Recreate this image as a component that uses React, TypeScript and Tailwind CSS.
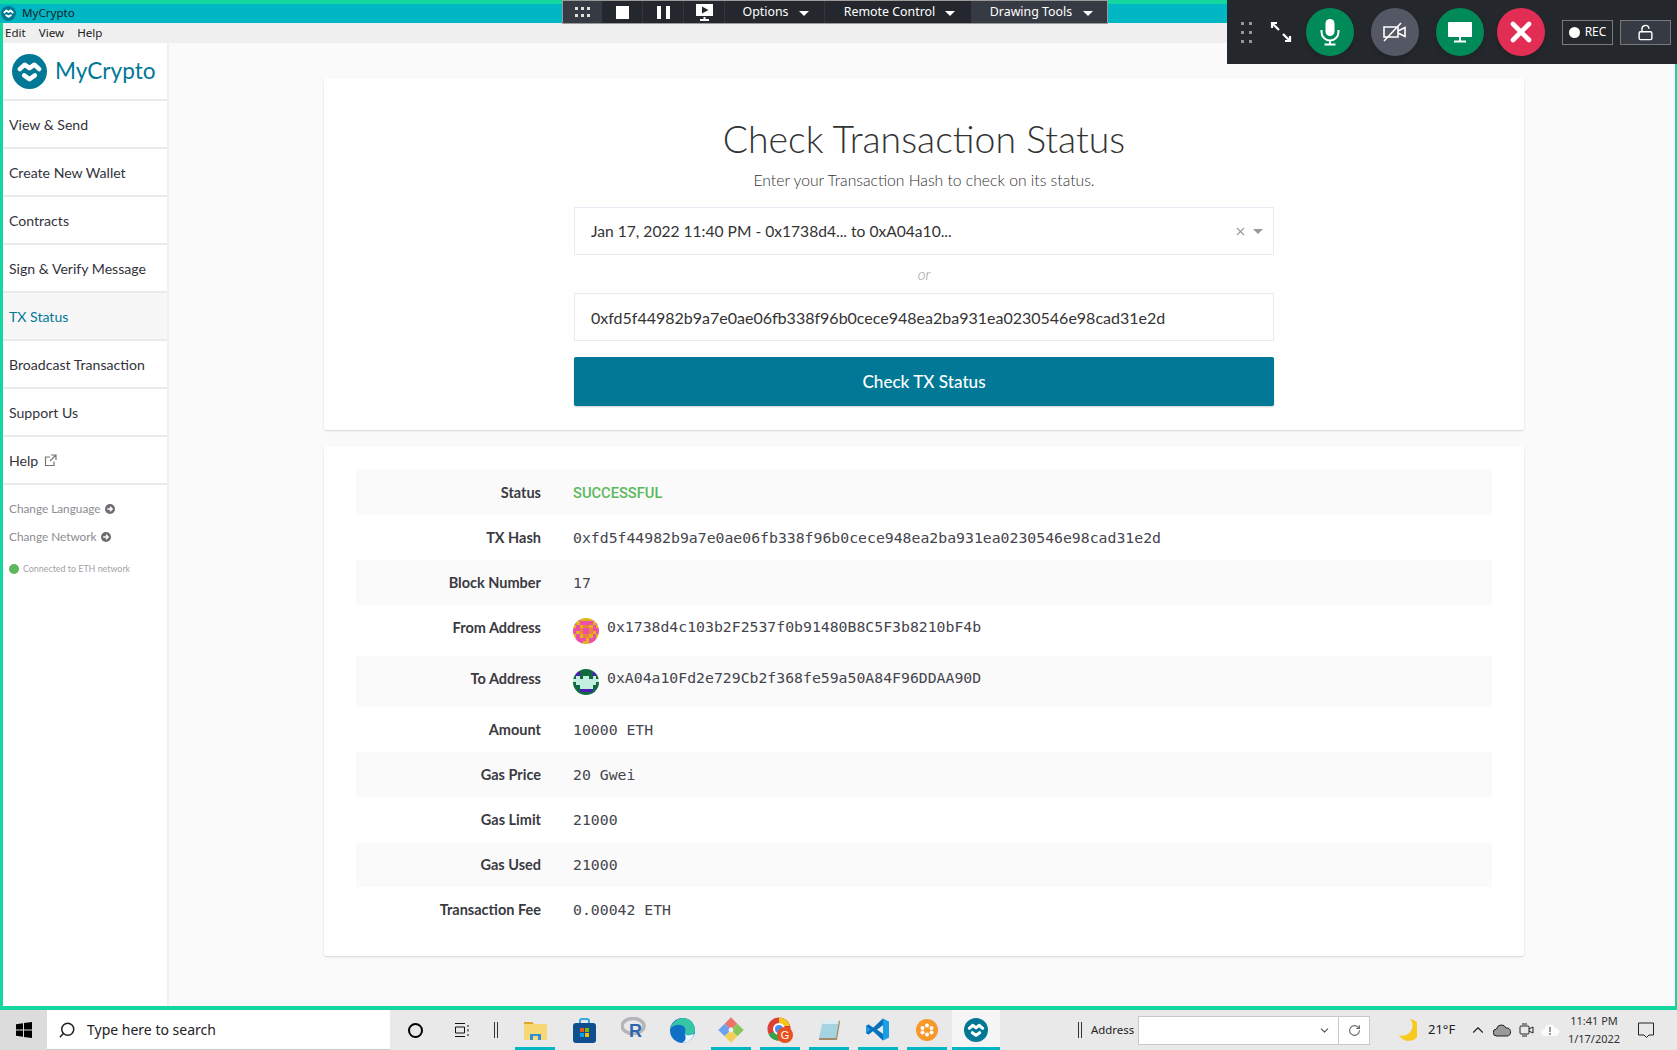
import React from "react";
import { ChevronDown, ChevronUp, LockOpen, RotateCw, Search, X } from "lucide-react";

const sans = "font-['Lato','Noto_Sans',sans-serif]";
const mono = "font-['DejaVu_Sans_Mono',monospace]";
const ui = "font-['Noto_Sans','Open_Sans',sans-serif]";

function Logo({ size, bg = "#007896" }: { size: number; bg?: string }) {
  return (
    <svg width={size} height={size} viewBox="0 0 36 36" className="shrink-0">
      <circle cx="18" cy="18" r="18" fill={bg} />
      <path d="M8 15.5 L13 11 L18 14.5 L23 11 L28 15.5" fill="none" stroke="#fff" strokeWidth="4.6" strokeLinecap="round" strokeLinejoin="round" />
      <path d="M12.5 22 L18 26 L23.5 22" fill="none" stroke="#fff" strokeWidth="4.6" strokeLinecap="round" strokeLinejoin="round" />
    </svg>
  );
}

function Identicon({ cells, colors }: { cells: string[]; colors: Record<string, string> }) {
  return (
    <svg width="26" height="26" viewBox="0 0 8 8" className="mt-[6px] shrink-0 rounded-full" shapeRendering="crispEdges">
      {cells.map((row, y) => row.split("").map((c, x) => <rect key={x + "-" + y} x={x} y={y} width="1" height="1" fill={colors[c]} />))}
    </svg>
  );
}

function CircleGo() {
  return (
    <svg width="10" height="10" viewBox="0 0 10 10" className="shrink-0">
      <circle cx="5" cy="5" r="5" fill="#6b6b70" />
      <path d="M2.2 5H7M5 2.8 7.2 5 5 7.2" fill="none" stroke="#fff" strokeWidth="1.4" />
    </svg>
  );
}

const nav = ["View & Send", "Create New Wallet", "Contracts", "Sign & Verify Message", "TX Status", "Broadcast Transaction", "Support Us"];

function Row({ label, odd, tall, children }: { label: string; odd: boolean; tall?: boolean; children: React.ReactNode }) {
  return (
    <div className={`flex items-center ${tall ? "h-[51px] pb-[6px]" : "h-[45px]"} ${odd ? "bg-[#fafafa]" : "bg-white"}`}>
      <div className={`${sans} w-[185px] shrink-0 text-right text-[14.5px] font-bold text-[#3a3a42]`}>{label}</div>
      <div className={`${mono} ml-8 flex items-center gap-2 text-[14.8px] text-[#45454d] ${tall ? "" : "mt-[2px]"}`}>{children}</div>
    </div>
  );
}

function TaskIcon({ x, active, children }: { x?: boolean; active?: boolean; children: React.ReactNode }) {
  return (
    <div className={`relative flex h-10 items-center justify-center ${active ? "w-[48px] bg-[#f5f5f5]" : "w-[40px]"} ${x ? "" : "border-b-[3px] border-[#00b7c3] pt-[2px]"}`}>{children}</div>
  );
}

export default function App() {
  return (
    <div className={`${sans} relative flex h-[1050px] w-[1677px] flex-col overflow-hidden bg-[#14d69f]`}>
      <div className="mt-1 flex h-[19px] items-center bg-[#00b7c3] pl-[1px]">
        <Logo size={15} bg="#00788f" />
        <span className={`${ui} ml-[6px] -translate-y-[1px] text-[11.6px] text-[#11222a]`}>MyCrypto</span>
      </div>
      <div className="flex h-[983px] pl-[3px] pr-[2px]">
        <div className="flex min-w-0 flex-1 flex-col">
          <div className={`${ui} flex h-5 items-center gap-[13px] bg-[#efefef] pl-[2px] text-[11.6px] text-[#222]`}>
            <span>Edit</span><span>View</span><span>Help</span>
          </div>
          <div className="flex min-h-0 flex-1 bg-[#fafafa]">
            <aside className="flex w-[166px] shrink-0 flex-col border-r-2 border-[#f0f0f0] bg-white">
              <div className="flex h-[58px] items-center gap-[8px] border-b-2 border-[#eaeaea] pl-[9px] pt-[1px]">
                <Logo size={35} />
                <span className="text-[22.6px] leading-none text-[#007896]">MyCrypto</span>
              </div>
              {nav.map((n) => (
                <div key={n} className={`flex h-12 items-center border-b-2 border-[#eaeaea] pl-[6px] pt-[1px] text-[14.1px] ${n === "TX Status" ? "bg-[#f7f7f7] text-[#007896]" : "text-[#33333b]"}`}>{n}</div>
              ))}
              <div className="flex h-12 items-center gap-[6px] border-b-2 border-[#eaeaea] pl-[6px] pt-[1px] text-[14.1px] text-[#33333b]">
                Help <svg width="13" height="13" viewBox="0 0 13 13" fill="none" stroke="#777" strokeWidth="1.2"><path d="M10 7.5V11.5H1.5V3H6M7 1H12V6M12 1 6 7" /></svg>
              </div>
              <div className="mt-[10px] flex h-[28px] items-center gap-[4px] pl-[6px] text-[11.8px] text-[#8c8c92]">
                Change Language <CircleGo />
              </div>
              <div className="flex h-[28px] items-center gap-[4px] pl-[6px] text-[11.8px] text-[#8c8c92]">
                Change Network <CircleGo />
              </div>
              <div className="mt-[11px] flex items-center gap-[4px] pl-[6px] text-[8.9px] text-[#a3a3a8]">
                <span className="h-[10px] w-[10px] rounded-full bg-[#5bb85d]" />
                Connected to ETH network
              </div>
            </aside>
            <main className="flex min-w-0 flex-1 flex-col items-start pl-[155px] pt-[35px]">
              <section className="flex h-[352px] w-[1200px] flex-col items-center rounded-[2px] bg-white pt-[37px] shadow-[0_1px_2px_rgba(0,0,0,0.15)]">
                <h1 className="text-[37.4px] font-light leading-[48px] text-[#333]">Check Transaction Status</h1>
                <p className="mt-[7px] text-[15.7px] font-light leading-5 text-[#333]">Enter your Transaction Hash to check on its status.</p>
                <div className="mt-[17px] flex h-[48px] w-[700px] items-center justify-between border border-[#e5ecf3] pl-[16px] pr-[9px] text-[15.6px] text-[#333]">
                  <span className="mt-[1px]">Jan 17, 2022 11:40 PM - 0x1738d4... to 0xA04a10...</span>
                  <span className="mr-[1px] flex items-center gap-[6px] text-[#999]">
                    <X size={13} />
                    <span className="h-0 w-0 border-x-[5px] border-t-[5px] border-x-transparent border-t-[#999]" />
                  </span>
                </div>
                <div className="flex h-[38px] items-center text-[15px] font-light italic text-[#999]">or</div>
                <div className="flex h-[48px] w-[700px] items-center border border-[#e5ecf3] pl-[16px] pt-[1px] text-[16px] text-[#333]">0xfd5f44982b9a7e0ae06fb338f96b0cece948ea2ba931ea0230546e98cad31e2d</div>
                <button className="mt-4 flex h-[49px] w-[700px] items-center justify-center rounded-[2px] bg-[#007896] text-[17.1px] font-medium text-white shadow-[0_1px_2px_rgba(0,0,0,0.2)]">Check TX Status</button>
              </section>
              <section className="mt-4 w-[1200px] rounded-[2px] bg-white px-8 pb-6 pt-6 shadow-[0_1px_2px_rgba(0,0,0,0.15)]">
                <Row label="Status" odd><span className="font-['Roboto',sans-serif] text-[14.7px] font-medium text-[#5cb85c]">SUCCESSFUL</span></Row>
                <Row label="TX Hash" odd={false}>0xfd5f44982b9a7e0ae06fb338f96b0cece948ea2ba931ea0230546e98cad31e2d</Row>
                <Row label="Block Number" odd>17</Row>
                <Row label="From Address" odd={false} tall>
                  <Identicon
                    colors={{ p: "#ec4ea8", y: "#dfb21f", o: "#ee7f42" }}
                    cells={["ppyyyypp", "pyppppyp", "ypyooypy", "ppoppopp", "pyoppoyp", "ypyooypy", "ppppyppp", "pppyyppp"]}
                  />
                  0x1738d4c103b2F2537f0b91480B8C5F3b8210bF4b
                </Row>
                <Row label="To Address" odd tall>
                  <Identicon
                    colors={{ g: "#0f6a3f", m: "#c4efe0", v: "#4a1fb0" }}
                    cells={["gggggggg", "gvggggvg", "gmgmmgmg", "mmmmmmmm", "gmmmmmmg", "ggmmmmgg", "ggvvvvgg", "gggggggg"]}
                  />
                  0xA04a10Fd2e729Cb2f368fe59a50A84F96DDAA90D
                </Row>
                <Row label="Amount" odd={false}>10000 ETH</Row>
                <Row label="Gas Price" odd>20 Gwei</Row>
                <Row label="Gas Limit" odd={false}>21000</Row>
                <Row label="Gas Used" odd>21000</Row>
                <Row label="Transaction Fee" odd={false}>0.00042 ETH</Row>
              </section>
            </main>
          </div>
        </div>
      </div>

      <footer className={`${ui} mt-1 flex h-10 items-center bg-[#e9e9e9] text-[#222]`}>
        <div className="flex h-10 w-[47px] items-center justify-center bg-[#dcdcdc]">
          <svg width="16" height="16" viewBox="0 0 16 16" fill="#000"><path d="M0 2.2 7 1.2V7.5H0ZM8 1 16 0V7.5H8ZM0 8.5H7V14.8L0 13.8ZM8 8.5H16V16L8 15Z" /></svg>
        </div>
        <div className="flex h-10 w-[343px] items-center gap-[11px] border-b border-[#ccc] bg-white pl-[11px] text-[14px]">
          <Search size={18} className="-scale-x-100" />
          <span>Type here to search</span>
        </div>
        <div className="flex w-[50px] justify-center">
          <span className="h-[15px] w-[15px] rounded-full border-[2.5px] border-black" />
        </div>
        <div className="flex w-[44px] justify-center">
          <svg width="16" height="16" viewBox="0 0 16 16" fill="none" stroke="#111"><path d="M1 1.5H11M1 14.5H11M1.5 5H10.5V11H1.5ZM14 3V5M14 7V9.5M14 12V14" /></svg>
        </div>
        <div className="ml-[10px] flex h-4 w-[4px] border-x border-[#333]" />
        <div className="ml-[17px] flex items-center gap-[9px]">
          <TaskIcon>
            <svg width="23" height="20" viewBox="0 0 23 20"><path d="M0 2H8L10 4H0Z" fill="#e0a526" /><rect y="4" width="23" height="16" fill="#f8d775" /><path d="M6 14H17V20H14V16H9V20H6Z" fill="#2f8fd8" /></svg>
          </TaskIcon>
        </div>
        <div className="ml-[9px] flex items-center gap-[9px]">
          <TaskIcon x>
            <svg width="23" height="25" viewBox="0 0 23 25"><path d="M7 7V3Q7 1 9 1H14Q16 1 16 3V7" fill="none" stroke="#35a7dd" strokeWidth="2" /><rect y="5" width="23" height="20" rx="3" fill="#0f4f8f" /><rect x="7" y="10" width="4" height="4" fill="#f25022" /><rect x="12" y="10" width="4" height="4" fill="#7fba00" /><rect x="7" y="15" width="4" height="4" fill="#00a4ef" /><rect x="12" y="15" width="4" height="4" fill="#ffb900" /></svg>
          </TaskIcon>
          <TaskIcon x>
            <svg width="25" height="26" viewBox="0 0 25 26"><ellipse cx="12" cy="9" rx="11" ry="7.5" fill="none" stroke="#b5b5bb" strokeWidth="3.5" /><text x="8" y="20" fontSize="18" fontWeight="700" fill="#2c66b0" fontFamily="Liberation Sans">R</text></svg>
          </TaskIcon>
          <TaskIcon x>
            <svg width="25" height="25" viewBox="0 0 25 25"><circle cx="12.5" cy="12.5" r="12.5" fill="#0f6fc6" /><path d="M0.5 11Q3 1 13 0Q23 0 25 11Q25 17 19.5 17Q15 17 15 14Q17 9 11 7Q4 6 0.5 11Z" fill="#36c5a5" /><path d="M14 14Q15 19 24.5 16Q21 25 12 25Q18 22 14 14Z" fill="#eaf6fb" /></svg>
          </TaskIcon>
          <TaskIcon>
            <svg width="24" height="24" viewBox="0 0 24 24" className="rotate-45"><rect x="3" y="3" width="9" height="9" fill="#e9746c" /><rect x="12" y="3" width="9" height="9" fill="#86c65a" /><rect x="3" y="12" width="9" height="9" fill="#6fa1f2" /><rect x="12" y="12" width="9" height="9" fill="#f2cf58" /><circle cx="12" cy="12" r="2.5" fill="#eee" /></svg>
          </TaskIcon>
          <TaskIcon>
            <svg width="26" height="26" viewBox="0 0 26 26"><circle cx="12" cy="12" r="11.5" fill="#de3f33" /><path d="M12 .5A11.5 11.5 0 0 1 23 9H12Z" fill="#f5c518" /><path d="M1.5 17A11.5 11.5 0 0 0 12 23.5L17 15H7Z" fill="#2fa650" /><circle cx="12" cy="12" r="5" fill="#4a8af4" stroke="#fff" strokeWidth="2" /><circle cx="18" cy="18" r="8" fill="#e8501f" /><text x="18" y="22" textAnchor="middle" fontSize="11" fill="#fff" fontFamily="Liberation Sans">G</text></svg>
          </TaskIcon>
          <TaskIcon>
            <svg width="24" height="24" viewBox="0 0 24 24"><path d="M6 2H22L19 20H2Z" fill="#a5d3e2" /><path d="M6 2H22L21 6H5Z" fill="#dcecf2" /><path d="M19 20L22 2L23 4L20 22H2V20Z" fill="#a58a68" /></svg>
          </TaskIcon>
          <TaskIcon>
            <svg width="24" height="25" viewBox="0 0 24 24"><path d="M17 1 23 4V20L17 23 7 13.5 2.5 17 0 15.5V8.5L2.5 7 7 10.5ZM17 7.5 11 12 17 16.5Z" fill="#1a9fe6" /><path d="M17 1V7.5L11 12 7 10.5ZM0 8.5 2.5 7 17 16.5V23L7 13.5 2.5 17 0 15.5 4.5 12Z" fill="#0b72b9" /></svg>
          </TaskIcon>
          <TaskIcon>
            <svg width="22" height="22" viewBox="0 0 22 22"><circle cx="11" cy="11" r="11" fill="#f7982a" /><g fill="#fff"><circle cx="11" cy="6.5" r="2" /><circle cx="11" cy="15.5" r="2" /><circle cx="6.5" cy="9" r="2" /><circle cx="15.5" cy="9" r="2" /><circle cx="6.5" cy="13.5" r="2" /><circle cx="15.5" cy="13.5" r="2" /></g></svg>
          </TaskIcon>
          <div className="-ml-[4px]">
            <TaskIcon active><Logo size={24} /></TaskIcon>
          </div>
        </div>
        <div className="ml-[78px] flex h-4 w-[4px] border-x border-[#333]" />
        <span className="ml-[9px] w-[42px] whitespace-nowrap text-[11.4px]">Address</span>
        <div className="ml-[5px] flex h-[29px] w-[232px] items-center border border-[#c8c8c8] bg-white">
          <div className="flex flex-1 justify-end pr-[7px]"><ChevronDown size={13} className="text-[#555]" /></div>
          <div className="flex h-full w-[31px] items-center justify-center border-l border-[#c8c8c8]"><RotateCw size={13} className="text-[#666]" /></div>
        </div>
        <svg width="18" height="22" viewBox="0 0 18 22" className="ml-[29px]"><path d="M11 0A11 11 0 1 1 0 16 10 10 0 0 0 11 0Z" fill="#f8c91e" /></svg>
        <span className="ml-[11px] w-[28px] whitespace-nowrap text-[13px]">21°F</span>
        <ChevronUp size={18} className="ml-[13px]" strokeWidth={1.5} />
        <svg width="18" height="13" viewBox="0 0 18 13" className="ml-[6px]"><path d="M4 12A3.5 3.5 0 0 1 3.5 5 5 5 0 0 1 13 4 4 4 0 0 1 14 12Z" fill="#9a9a9a" stroke="#222" /></svg>
        <svg width="16" height="18" viewBox="0 0 16 18" fill="none" stroke="#222" className="ml-[8px]"><rect x="1" y="5" width="9" height="8" rx="1" /><path d="M10 8L14 6V12L10 10M3 3H8M3 15H8" /></svg>
        <svg width="18" height="14" viewBox="0 0 18 14" className="ml-[6px]"><path d="M4 13A3.5 3.5 0 0 1 3.5 6 5.5 5.5 0 0 1 14 5 4 4 0 0 1 14 13Z" fill="#fbfbfb" /><rect x="8" y="4" width="2" height="5" fill="#999" /><rect x="8" y="10" width="2" height="2" fill="#999" /></svg>
        <div className="ml-[6px] flex w-[58px] flex-col items-center text-[11px] leading-[18px] text-[#333]">
          <span>11:41 PM</span>
          <span>1/17/2022</span>
        </div>
        <svg width="18" height="18" viewBox="0 0 18 18" fill="none" stroke="#222" className="ml-[14px]"><path d="M1.5 2H16.5V14H12L9.5 16.5 7 14H1.5Z" /></svg>
      </footer>

      {/* remote-session toolbars that float over the captured desktop */}
      <div className={`${ui} absolute left-[562px] top-0 flex h-[24px] w-[546px] items-stretch border border-[#9a9a9a] bg-[#24272d] text-[12.4px] text-white`}>
        <div className="flex w-[39px] items-center justify-center bg-[#363a43]">
          <svg width="16" height="10" viewBox="0 0 16 10" fill="#ddd"><rect y="0" width="3" height="3" /><rect x="6" width="3" height="3" /><rect x="12" width="3" height="3" /><rect y="7" width="3" height="3" /><rect x="6" y="7" width="3" height="3" /><rect x="12" y="7" width="3" height="3" /></svg>
        </div>
        <div className="flex w-[41px] items-center justify-center border-r border-[#33363d]"><span className="h-[13px] w-[13px] bg-white" /></div>
        <div className="flex w-[41px] items-center justify-center gap-[5px] border-r border-[#33363d]"><span className="h-[13px] w-[4px] bg-white" /><span className="h-[13px] w-[4px] bg-white" /></div>
        <div className="flex w-[41px] items-center justify-center border-r border-[#33363d]">
          <svg width="17" height="19" viewBox="0 0 17 19"><path d="M0 1H17V13H0ZM6 3.5V10.5L12.5 7Z" fill="#fff" fillRule="evenodd" /><path d="M7.5 14H9.5V16H13V18H4V16H7.5Z" fill="#fff" /></svg>
        </div>
        <div className="flex w-[100px] items-center justify-center gap-[10px] border-r border-[#33363d] pl-[2px]">Options <span className="mt-[3px] h-0 w-0 border-x-[5px] border-t-[5px] border-x-transparent border-t-white" /></div>
        <div className="flex w-[146px] items-center justify-center gap-[10px] pl-[3px]">Remote Control <span className="mt-[3px] h-0 w-0 border-x-[5px] border-t-[5px] border-x-transparent border-t-white" /></div>
        <div className="flex flex-1 items-center justify-center gap-[11px] bg-[#363a43] pl-[5px]">Drawing Tools <span className="mt-[3px] h-0 w-0 border-x-[5px] border-t-[5px] border-x-transparent border-t-white" /></div>
      </div>

      <div className={`${ui} absolute right-0 top-0 flex h-[64px] w-[450px] items-center bg-[#24272c] text-white`}>
        <div className="ml-[14px] grid grid-cols-2 gap-x-[5px] gap-y-[6px]">
          {[0, 1, 2, 3, 4, 5].map((i) => <span key={i} className="h-[3px] w-[3px] bg-[#8f95a3]" />)}
        </div>
        <svg width="22" height="22" viewBox="0 0 22 22" fill="none" stroke="#fff" strokeWidth="2.2" className="ml-[18px]">
          <path d="M2 7V2H7M2 2 9 9M20 15V20H15M20 20 13 13" />
        </svg>
        <div className="ml-[14px] flex h-12 w-12 items-center justify-center rounded-full bg-[#008a58] shadow-md">
          <svg width="20" height="27" viewBox="0 0 20 27"><rect x="5.5" y="0" width="9" height="17" rx="4.5" fill="#fff" /><path d="M1.5 11V13A8.5 8.5 0 0 0 18.5 13V11M10 21.5V25M4.5 25.5H15.5" fill="none" stroke="#fff" strokeWidth="2" /></svg>
        </div>
        <div className="ml-[17px] flex h-12 w-12 items-center justify-center rounded-full bg-[#545864] shadow-md">
          <svg width="24" height="20" viewBox="0 0 24 20" fill="none" stroke="#fff" strokeWidth="1.6"><path d="M1 5H15V15H1ZM15 9 22 5.5V14.5L15 11M1 19 18 1" /></svg>
        </div>
        <div className="ml-[17px] flex h-12 w-12 items-center justify-center rounded-full bg-[#008a58] shadow-md">
          <svg width="24" height="21" viewBox="0 0 24 21" fill="#fff"><rect y="0" width="24" height="15" rx="1" /><rect x="11" y="15" width="2" height="4" /><rect x="6" y="18.5" width="12" height="2" /></svg>
        </div>
        <div className="ml-[13px] flex h-12 w-12 items-center justify-center rounded-full bg-[#e22d55] shadow-md"><X size={32} strokeWidth={3.5} /></div>
        <div className="ml-[17px] flex h-[25px] w-[51px] items-center justify-center gap-[5px] border border-[#77797e] text-[12px]"><span className="h-[11px] w-[11px] rounded-full bg-white" />REC</div>
        <div className="ml-[7px] flex h-[25px] w-[51px] items-center justify-center border border-[#77797e] bg-[#363a42]"><LockOpen size={17} /></div>
      </div>
    </div>
  );
}
